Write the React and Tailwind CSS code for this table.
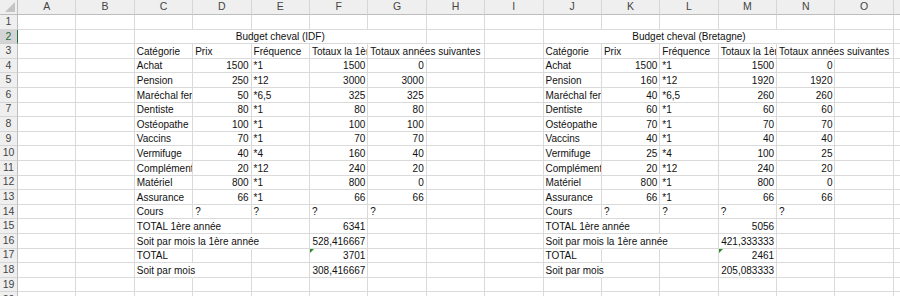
import React from 'react';

const COLS = ['A', 'B', 'C', 'D', 'E', 'F', 'G', 'H', 'I', 'J', 'K', 'L', 'M', 'N', 'O'];
const ROWS = 19;

// t = text, r = right aligned (numbers), ov = number of empty cells the text spills into,
// flag = little green error marker in the top-left corner
const idf = {
  title: 'Budget cheval (IDF)',
  items: [
    ['Achat', 1500, '*1', 1500, 0],
    ['Pension', 250, '*12', 3000, 3000],
    ['Maréchal ferrant', 50, '*6,5', 325, 325],
    ['Dentiste', 80, '*1', 80, 80],
    ['Ostéopathe', 100, '*1', 100, 100],
    ['Vaccins', 70, '*1', 70, 70],
    ['Vermifuge', 40, '*4', 160, 40],
    ['Compléments', 20, '*12', 240, 20],
    ['Matériel', 800, '*1', 800, 0],
    ['Assurance', 66, '*1', 66, 66],
  ],
  totals: ['6341', '528,416667', '3701', '308,416667'],
};

const bretagne = {
  title: 'Budget cheval (Bretagne)',
  items: [
    ['Achat', 1500, '*1', 1500, 0],
    ['Pension', 160, '*12', 1920, 1920],
    ['Maréchal ferrant', 40, '*6,5', 260, 260],
    ['Dentiste', 60, '*1', 60, 60],
    ['Ostéopathe', 70, '*1', 70, 70],
    ['Vaccins', 40, '*1', 40, 40],
    ['Vermifuge', 25, '*4', 100, 25],
    ['Compléments', 20, '*12', 240, 20],
    ['Matériel', 800, '*1', 800, 0],
    ['Assurance', 66, '*1', 66, 66],
  ],
  totals: ['5056', '421,333333', '2461', '205,083333'],
};

function buildSheet() {
  const sheet = Array.from({ length: ROWS + 1 }, () => Array(COLS.length).fill(null));
  const merges = {};

  const fill = (c, data) => {
    merges[`2-${c}`] = { span: 5, t: data.title };
    sheet[3][c] = { t: 'Catégorie' };
    sheet[3][c + 1] = { t: 'Prix' };
    sheet[3][c + 2] = { t: 'Fréquence' };
    sheet[3][c + 3] = { t: 'Totaux la 1ère année' };
    sheet[3][c + 4] = { t: 'Totaux années suivantes', ov: 1 };
    data.items.forEach((it, i) => {
      const r = 4 + i;
      sheet[r][c] = { t: it[0] };
      sheet[r][c + 1] = { t: String(it[1]), r: true };
      sheet[r][c + 2] = { t: it[2] };
      sheet[r][c + 3] = { t: String(it[3]), r: true };
      sheet[r][c + 4] = { t: String(it[4]), r: true };
    });
    sheet[14][c] = { t: 'Cours' };
    for (let k = 1; k < 5; k++) sheet[14][c + k] = { t: '?' };
    sheet[15][c] = { t: 'TOTAL 1ère année', ov: 1 };
    sheet[16][c] = { t: 'Soit par mois la 1ère année', ov: 2 };
    sheet[17][c] = { t: 'TOTAL' };
    sheet[18][c] = { t: 'Soit par mois', ov: 1 };
    sheet[15][c + 3] = { t: data.totals[0], r: true };
    sheet[16][c + 3] = { t: data.totals[1], r: true };
    sheet[17][c + 3] = { t: data.totals[2], r: true, flag: true };
    sheet[18][c + 3] = { t: data.totals[3], r: true };
  };

  fill(2, idf);
  fill(9, bretagne);
  return { sheet, merges };
}

function ColHeader({ label }) {
  return (
    <div className="flex items-center justify-center bg-[#efefef] border-r border-b border-r-[#d6d6d6] border-b-[#bdbdbd] text-[#444] text-[10.5px]">
      {label}
    </div>
  );
}

function RowHeader({ n, selected }) {
  if (selected) {
    return (
      <div className="flex items-center justify-center bg-[#d4d4d4] border-b border-r border-b-[#d0d0d0] border-r-[#217346] text-[#1d6b3f] text-[10.5px]">
        {n}
      </div>
    );
  }
  return (
    <div className="flex items-center justify-center bg-[#efefef] border-b border-r border-b-[#d6d6d6] border-r-[#bdbdbd] text-[#444] text-[10.5px]">
      {n}
    </div>
  );
}

function Cell({ cell, hideRight }) {
  const border = hideRight ? 'border-r border-r-transparent' : 'border-r border-r-[#dadada]';
  const align = cell && cell.r ? 'justify-end' : 'justify-start';
  const clip = cell && cell.ov ? 'overflow-visible' : 'overflow-hidden';
  return (
    <div className={`relative flex items-end ${align} ${clip} ${border} border-b border-b-[#dadada] px-[2px] whitespace-nowrap text-[10px] leading-[13px] text-[#111]`}>
      {cell && cell.flag && (
        <svg className="absolute -top-px left-0" width="5" height="5" viewBox="0 0 5 5">
          <polygon points="0,0 5,0 0,5" fill="#2a8a2a" />
        </svg>
      )}
      {cell ? cell.t : ''}
    </div>
  );
}

export default function App() {
  const { sheet, merges } = buildSheet();

  const cells = [];
  // corner + column letters
  cells.push(
    <div key="corner" className="relative bg-[#efefef] border-r border-b border-r-[#bdbdbd] border-b-[#bdbdbd]">
      <svg className="absolute right-[2px] bottom-[2px]" width="10" height="10" viewBox="0 0 10 10">
        <polygon points="10,0 10,10 0,10" fill="#c4c4c4" />
      </svg>
    </div>
  );
  COLS.forEach((c) => cells.push(<ColHeader key={`h${c}`} label={c} />));
  cells.push(<div key="hx" className="bg-[#efefef] border-b border-b-[#bdbdbd]" />);

  for (let r = 1; r <= ROWS + 1; r++) {
    cells.push(<RowHeader key={`r${r}`} n={r} selected={r === 2} />);
    const row = sheet[r] || [];
    let spill = 0;
    for (let c = 0; c < COLS.length; c++) {
      const merge = merges[`${r}-${c}`];
      if (merge) {
        cells.push(
          <div
            key={`m${r}-${c}`}
            className="col-span-5 flex items-end justify-center border-r border-b border-r-[#dadada] border-b-[#dadada] whitespace-nowrap text-[10px] leading-[13px] text-[#111]"
          >
            {merge.t}
          </div>
        );
        c += merge.span - 1;
        continue;
      }
      const cell = row[c];
      let hideRight = false;
      if (cell && cell.ov) {
        spill = cell.ov;
        hideRight = true;
      } else if (!cell && spill > 0) {
        spill -= 1;
        hideRight = spill > 0;
      } else {
        spill = 0;
      }
      cells.push(<Cell key={`c${r}-${c}`} cell={cell} hideRight={hideRight} />);
    }
    cells.push(<div key={`x${r}`} className="bg-white border-b border-b-[#dadada]" />);
  }

  return (
    <div className="w-[900px] h-[296px] overflow-hidden bg-white font-['Liberation_Sans',Arial,sans-serif]">
      <div className="grid h-full grid-cols-[18px_repeat(15,58.4px)_1fr] grid-rows-[15px_repeat(19,14.6px)_1fr]">
        {cells}
      </div>
    </div>
  );
}
